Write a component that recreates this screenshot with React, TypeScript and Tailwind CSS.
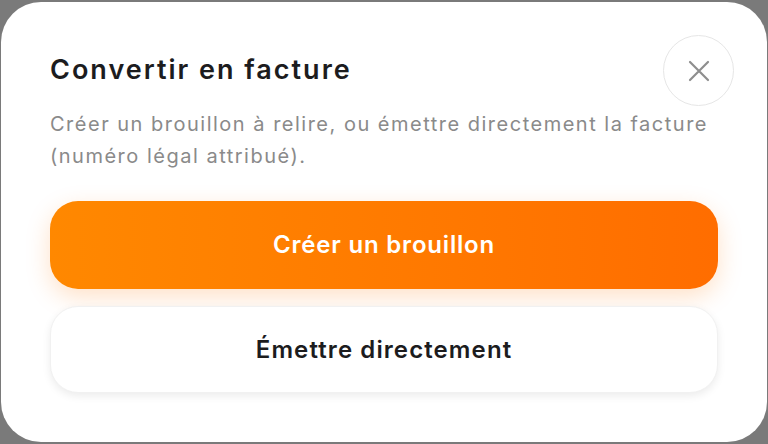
export default function App() {
  return (
    <div className="h-[444px] w-[768px] overflow-hidden bg-[#7a7a7a] pt-[2px] px-[1px] font-['Inter','Liberation_Sans',sans-serif]">
      <div className="h-[440px] rounded-[40px] bg-white px-[49px] pt-[33px] pb-[49px]">
        <div className="flex items-center justify-between">
          <h2 className="text-[27px] font-semibold tracking-[2px] text-[#1c1c1e]">
            Convertir en facture
          </h2>
          <button className="-mr-4 flex h-[71px] w-[71px] items-center justify-center rounded-full border border-[#e6e6e6] bg-white text-[#8e8e8e]">
            <svg width="22" height="22" viewBox="0 0 22 22" fill="none" stroke="currentColor" strokeWidth="2.2" strokeLinecap="round">
              <path d="M2 2L20 20M20 2L2 20" />
            </svg>
          </button>
        </div>
        <p className="mt-[2px] text-[20px] leading-[32px] tracking-[1.5px] text-[#8a8a8a]">
          Créer un brouillon à relire, ou émettre directement la facture (numéro légal attribué).
        </p>
        <div className="mt-[29px] flex flex-col gap-[17px]">
          <button className="h-[88px] w-full rounded-[28px] bg-gradient-to-r from-[#ff8800] to-[#ff6d00] text-[24px] font-semibold tracking-[0.8px] text-white shadow-[0_8px_24px_rgba(255,120,0,0.22)]">
            Créer un brouillon
          </button>
          <button className="h-[87px] w-full rounded-[28px] border border-[#f1f1f1] bg-white text-[24px] font-semibold tracking-[1.1px] text-[#1c1c1e] shadow-[0_3px_8px_rgba(0,0,0,0.08)]">
            Émettre directement
          </button>
        </div>
      </div>
    </div>
  );
}
